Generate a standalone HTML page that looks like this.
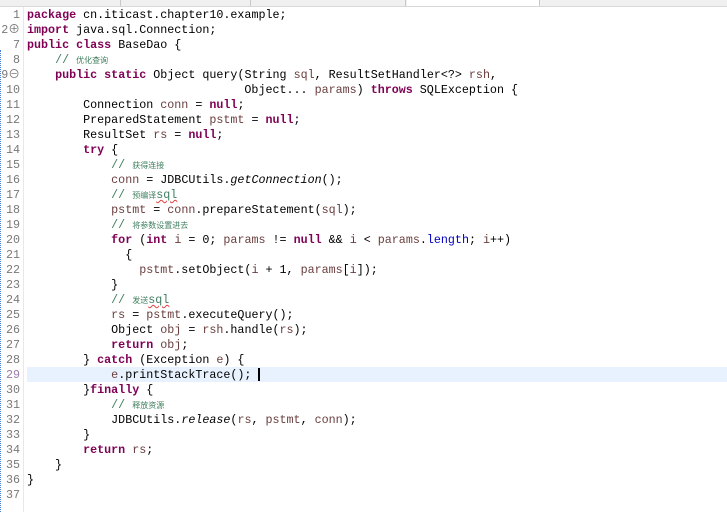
<!DOCTYPE html>
<html><head><meta charset="utf-8"><style>
body{margin:0;width:727px;height:512px;background:#fff;overflow:hidden;position:relative;font-family:"Liberation Mono","Noto Sans CJK SC",monospace;font-size:11.7px;}
.tabs{position:absolute;left:0;top:0;width:727px;height:6px;background:#f0f0f0;border-bottom:1px solid #d8d8d8}
.tab{position:absolute;top:0;height:6px;border-right:1px solid #c8c8c8}
.gut{position:absolute;left:23px;top:7px;width:1px;height:505px;background:#e8e8e8}
.dots{position:absolute;left:0;top:50px;width:1px;height:462px;border-left:1px dotted #4a7fd0}
.hl{position:absolute;left:27px;top:367px;width:700px;height:15px;background:#e8f2fe}
.ln{position:absolute;left:0;width:20px;text-align:right;color:#787878;line-height:15px;height:15px;white-space:pre}
.c{position:absolute;left:27px;line-height:15px;height:15px;white-space:pre;color:#000}
.k{color:#7f0055;font-weight:bold}.v{color:#6a3e3e}.m{color:#3f7f5f}.cj{font-size:8px;color:#3f7f5f}
.u{text-decoration:underline wavy #e04040;text-decoration-thickness:1px;text-underline-offset:1px}
i{font-style:italic}
.cur{position:absolute;left:258px;top:368px;width:2px;height:13px;background:#000}
</style></head><body>
<div class="tabs"><div class="tab" style="left:0;width:120px"></div><div class="tab" style="left:120px;width:130px"></div><div class="tab" style="left:250px;width:155px"></div><div class="tab" style="left:407px;width:132px;background:#fff"></div></div>
<div class="gut"></div><div class="dots"></div>
<div class="hl"></div>
<div class="cur"></div>
<div id="code"></div>
<script>
const L=[
["1",'<span class="k">package</span> cn.iticast.chapter10.example;'],
["2⊕",'<span class="k">import</span> java.sql.Connection;'],
["7",'<span class="k">public</span> <span class="k">class</span> BaseDao {'],
["8",'    <span class="m">// </span><span class="cj">优化查询</span>'],
["9⊖",'    <span class="k">public</span> <span class="k">static</span> Object query(String <span class="v">sql</span>, ResultSetHandler&lt;?&gt; <span class="v">rsh</span>,'],
["10",'                               Object... <span class="v">params</span>) <span class="k">throws</span> SQLException {'],
["11",'        Connection <span class="v">conn</span> = <span class="k">null</span>;'],
["12",'        PreparedStatement <span class="v">pstmt</span> = <span class="k">null</span>;'],
["13",'        ResultSet <span class="v">rs</span> = <span class="k">null</span>;'],
["14",'        <span class="k">try</span> {'],
["15",'            <span class="m">// </span><span class="cj">获得连接</span>'],
["16",'            <span class="v">conn</span> = JDBCUtils.<i>getConnection</i>();'],
["17",'            <span class="m">// </span><span class="cj">预编译</span><span class="m u">sql</span>'],
["18",'            <span class="v">pstmt</span> = <span class="v">conn</span>.prepareStatement(<span class="v">sql</span>);'],
["19",'            <span class="m">// </span><span class="cj">将参数设置进去</span>'],
["20",'            <span class="k">for</span> (<span class="k">int</span> <span class="v">i</span> = 0; <span class="v">params</span> != <span class="k">null</span> &amp;&amp; <span class="v">i</span> &lt; <span class="v">params</span>.<span style="color:#0000c0">length</span>; <span class="v">i</span>++)'],
["21",'              {'],
["22",'                <span class="v">pstmt</span>.setObject(<span class="v">i</span> + 1, <span class="v">params</span>[<span class="v">i</span>]);'],
["23",'            }'],
["24",'            <span class="m">// </span><span class="cj">发送</span><span class="m u">sql</span>'],
["25",'            <span class="v">rs</span> = <span class="v">pstmt</span>.executeQuery();'],
["26",'            Object <span class="v">obj</span> = <span class="v">rsh</span>.handle(<span class="v">rs</span>);'],
["27",'            <span class="k">return</span> <span class="v">obj</span>;'],
["28",'        } <span class="k">catch</span> (Exception <span class="v">e</span>) {'],
["29",'            <span class="v">e</span>.printStackTrace();'],
["30",'        }<span class="k">finally</span> {'],
["31",'            <span class="m">// </span><span class="cj">释放资源</span>'],
["32",'            JDBCUtils.<i>release</i>(<span class="v">rs</span>, <span class="v">pstmt</span>, <span class="v">conn</span>);'],
["33",'        }'],
["34",'        <span class="k">return</span> <span class="v">rs</span>;'],
["35",'    }'],
["36",'}'],
["37",'']];
let h='';L.forEach((l,i)=>{const t=8+i*15;let n=l[0];if(n.length>2&&/[⊕⊖]/.test(n)){n=n[0]+'<span style="font-size:9px;color:#555">'+n[1]+'</span>';}
h+='<div class="ln" style="top:'+t+'px;'+(l[0]=="29"?'color:#9a7aa8;':'')+'">'+n+'</div><div class="c" style="top:'+t+'px">'+l[1]+'</div>';});
document.getElementById('code').innerHTML=h;
</script>
</body></html>
